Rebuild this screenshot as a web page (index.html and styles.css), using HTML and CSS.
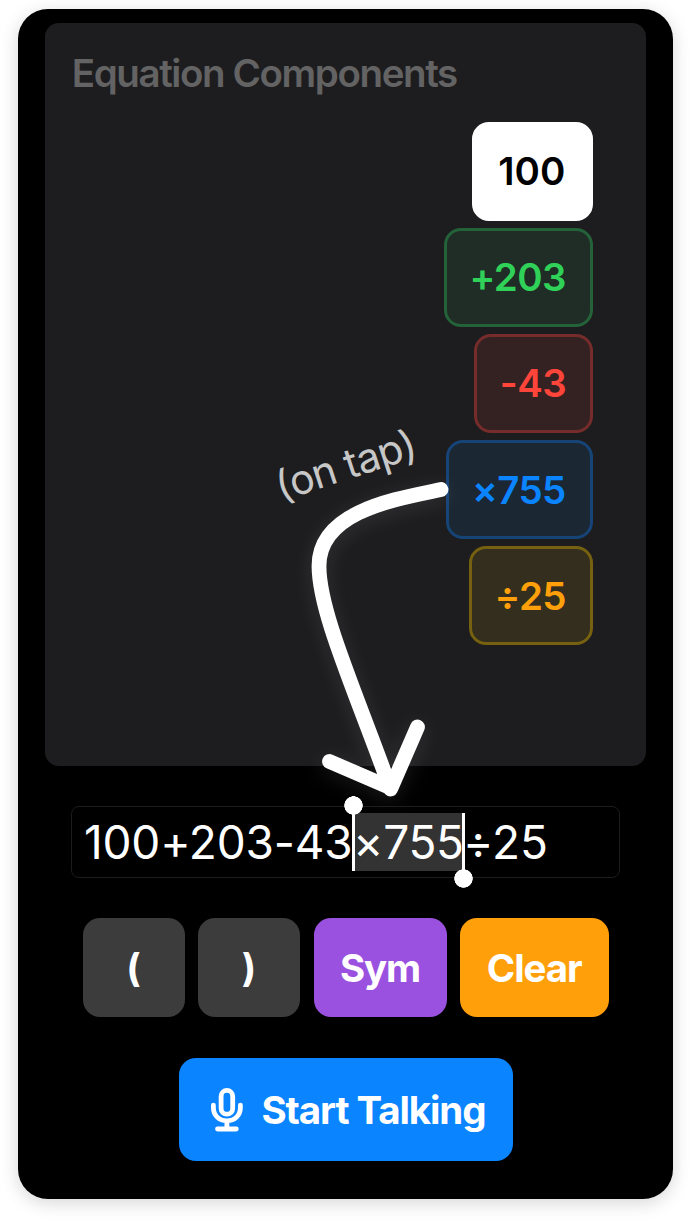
FILE: index.html
```
<!DOCTYPE html>
<html lang="en">
<head>
<meta charset="utf-8">
<title>Equation Components</title>
<link rel="stylesheet" href="styles.css">
</head>
<body>
<main class="phone">
  <section class="panel">
    <h1 class="title"><span>Equation Components</span></h1>
    <div class="chips">
      <button class="chip chip-base"><span>100</span></button>
      <button class="chip chip-add"><span>+203</span></button>
      <button class="chip chip-sub"><span>-43</span></button>
      <button class="chip chip-mul"><span>×755</span></button>
      <button class="chip chip-div"><span>÷25</span></button>
    </div>
  </section>
  <div class="field"><span class="before">100+203-43</span><span class="selected">×755</span><span class="after">÷25</span></div>
  <div class="keys">
    <button class="key key-paren"><span>(</span></button>
    <button class="key key-paren"><span>)</span></button>
    <button class="key key-sym"><span>Sym</span></button>
    <button class="key key-clear"><span>Clear</span></button>
  </div>
  <button class="talk">
    <svg class="mic" viewBox="0 0 32 44" width="32" height="44">
      <rect x="10.1" y="2.400" width="11.600" height="23.800" rx="5.8"/>
      <path d="M2.4 17.2V19.2C2.4 27.5 8 32.8 15.9 32.8S29.4 27.5 29.4 19.2V17.2M15.9 33.1V41M6.5 41H25.3"/>
    </svg>
    <span>Start Talking</span>
  </button>
</main>
<span class="note">(on tap)</span>
<svg class="arrow" viewBox="0 0 691 1226" width="691" height="1226">
  <path d="M441 489.5C396 499 319 511 319 566C319 612 355 690 390.5 789M329.5 761.500L391 788L417.500 727"/>
</svg>
</body>
</html>
```
FILE: styles.css
```
* { box-sizing: border-box; }
body {
  margin: 0;
  padding: 9px 18px 27px;
  position: relative;
  width: 691px;
  height: 1226px;
  overflow: hidden;
  background: #fff;
  font-family: Inter, "Liberation Sans", sans-serif;
}
button {
  border: 0;
  margin: 0;
  font: inherit;
}
.phone {
  width: 655px;
  height: 1190px;
  padding: 14px 27px 0;
  border-radius: 30px;
  background: #000;
  box-shadow: 0 4px 18px rgba(0, 0, 0, 0.16);
  display: flex;
  flex-direction: column;
  align-items: center;
}
.panel {
  width: 601.500px;
  height: 743px;
  padding: 27px 53.500px 0 27px;
  border-radius: 14px;
  background: #1d1d1f;
}
.title {
  margin: 0;
  height: 46px;
  line-height: 46px;
  font-size: 38.500px;
  font-weight: 600;
  letter-spacing: -1.400px;
  color: #636364;
  white-space: nowrap;
}
.chips {
  margin-top: 25.500px;
  display: flex;
  flex-direction: column;
  align-items: flex-end;
  gap: 7px;
}
.chip {
  height: 99.200px;
  padding: 0;
  border: 3.400px solid;
  border-radius: 17px;
  display: flex;
  align-items: center;
  justify-content: center;
  font-size: 38.500px;
  font-weight: 600;
  letter-spacing: -0.600px;
}
.chip span { margin-right: 1px; }
.chip-base { width: 121px; background: #fff; border-color: #fff; color: #000; letter-spacing: 0; }
.chip-add { width: 149px; background: #202d26; border-color: #246239; color: #30d158; }
.chip-sub { width: 118.500px; background: #342223; border-color: #762c2a; color: #ff453a; }
.chip-mul { width: 147px; background: #1b2733; border-color: #164477; color: #0a84ff; }
.chip-div { width: 124px; background: #342e1e; border-color: #75610f; color: #ff9f0a; }
.field {
  margin-top: 40px;
  width: 549px;
  height: 72px;
  padding: 6px 12px;
  border: 1px solid #1c1c1e;
  border-radius: 8px;
  display: flex;
  align-items: flex-start;
  line-height: 58px;
  font-size: 46px;
  font-feature-settings: "calt" 0;
  color: #fff;
  white-space: nowrap;
}
.before { width: 269px; letter-spacing: -0.200px; }
.selected {
  position: relative;
  width: 110px;
  height: 58px;
  background: #333;
  letter-spacing: -0.300px;
}
.selected::before,
.selected::after {
  content: "";
  position: absolute;
  width: 19px;
  height: 75px;
}
.selected::before {
  left: -9px;
  top: -17px;
  background: radial-gradient(circle at 9.500px 9.500px, #fff 8.900px, transparent 9.500px), linear-gradient(#fff, #fff) 8px 0 / 3px 100% no-repeat;
}
.selected::after {
  right: -10px;
  top: 0;
  background: radial-gradient(circle at 9.500px 65.500px, #fff 8.900px, transparent 9.500px), linear-gradient(#fff, #fff) 8px 0 / 3px 70px no-repeat;
}
.keys {
  margin-top: 40px;
  display: flex;
  gap: 13.500px;
}
.key {
  height: 99px;
  padding: 0;
  border-radius: 17px;
  font-size: 38.500px;
  font-weight: 700;
  color: #fff;
}
.key-paren { width: 102px; background: #3c3c3c; }
.key-sym { width: 133px; background: #9b51e0; letter-spacing: -1.200px; }
.key-clear { width: 148.500px; background: #ff9f0a; letter-spacing: -1.100px; }
.talk {
  margin-top: 41px;
  width: 334px;
  height: 103px;
  padding: 0 0 0 32px;
  border-radius: 17px;
  background: #0a84ff;
  display: flex;
  align-items: center;
  gap: 19px;
  font-size: 38.500px;
  font-weight: 700;
  letter-spacing: -1.100px;
  color: #fff;
  white-space: nowrap;
}
.mic {
  flex: none;
  fill: none;
  stroke: #fff;
  stroke-width: 4.800;
  stroke-linecap: round;
}
.note {
  position: absolute;
  left: 273px;
  top: 438.500px;
  width: 142px;
  line-height: 52px;
  font-size: 41px;
  letter-spacing: -0.800px;
  color: #c7c7c7;
  white-space: nowrap;
  transform: rotate(-18deg);
}
.arrow {
  position: absolute;
  left: 0;
  top: 0;
  pointer-events: none;
  fill: none;
  stroke: #fff;
  stroke-width: 14.800;
  stroke-linecap: round;
  stroke-linejoin: round;
  filter: drop-shadow(0 4px 10px rgba(255, 255, 255, 0.1));
}
```
